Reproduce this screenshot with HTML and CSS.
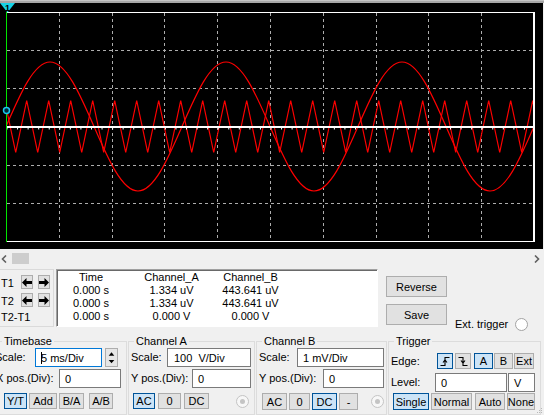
FILE: index.html
```html
<!DOCTYPE html>
<html>
<head>
<meta charset="utf-8">
<title>Oscilloscope</title>
<link rel="stylesheet" href="styles.css">
</head>
<body>
<div class="topbar"></div>
<div class="screen">
  <svg width="543" height="246" viewBox="0 3 543 246" xmlns="http://www.w3.org/2000/svg">
    <defs>
      <clipPath id="plot"><rect x="7" y="13" width="526" height="228"/></clipPath>
    </defs>
    <rect x="0" y="3" width="543" height="246" fill="#000"/>
    <g stroke="#adadad" stroke-width="1" stroke-dasharray="3 3" fill="none">
      <line x1="59.5" y1="13" x2="59.5" y2="241"/>
      <line x1="112.5" y1="13" x2="112.5" y2="241"/>
      <line x1="164.5" y1="13" x2="164.5" y2="241"/>
      <line x1="217.5" y1="13" x2="217.5" y2="241"/>
      <line x1="270.5" y1="13" x2="270.5" y2="241"/>
      <line x1="323.5" y1="13" x2="323.5" y2="241"/>
      <line x1="376.5" y1="13" x2="376.5" y2="241"/>
      <line x1="428.5" y1="13" x2="428.5" y2="241"/>
      <line x1="481.5" y1="13" x2="481.5" y2="241"/>
      <line x1="7" y1="50.5" x2="533" y2="50.5"/>
      <line x1="7" y1="88.5" x2="533" y2="88.5"/>
      <line x1="7" y1="165.5" x2="533" y2="165.5"/>
      <line x1="7" y1="203.5" x2="533" y2="203.5"/>
    </g>
    <g clip-path="url(#plot)" fill="none" stroke="#ff0000" stroke-width="1.2">
      <path d="M6,126.5 c14.35,-33.04 28.07,-64.5 44,-64.5 s29.65,31.46 44,64.5 s28.07,64.5 44,64.5 s29.65,-31.46 44,-64.5 s28.07,-64.5 44,-64.5 s29.65,31.46 44,64.5 s28.07,64.5 44,64.5 s29.65,-31.46 44,-64.5 s28.07,-64.5 44,-64.5 s29.65,31.46 44,64.5 s28.07,64.5 44,64.5 s29.65,-31.46 44,-64.5"/>
      <path d="M6,106.6 L15.7,152.5 l11,-52 l11,52 l11,-52 l11,52 l11,-52 l11,52 l11,-52 l11,52 l11,-52 l11,52 l11,-52 l11,52 l11,-52 l11,52 l11,-52 l11,52 l11,-52 l11,52 l11,-52 l11,52 l11,-52 l11,52 l11,-52 l11,52 l11,-52 l11,52 l11,-52 l11,52 l11,-52 l11,52 l11,-52 l11,52 l11,-52 l11,52 l11,-52 l11,52 l11,-52 l11,52 l11,-52 l11,52 l11,-52 l11,52 l11,-52 l11,52 l11,-52 l11,52 l11,-52 l1.3,6.1"/>
    </g>
    <line x1="7" y1="127" x2="533" y2="127" stroke="#fff" stroke-width="2"/>
    <line x1="6.5" y1="128.8" x2="533" y2="128.8" stroke="#fff" stroke-width="1.5" stroke-dasharray="1 9.56"/>
    <line x1="7" y1="12.5" x2="534" y2="12.5" stroke="#fff" stroke-width="1"/>
    <line x1="6" y1="241.5" x2="535" y2="241.5" stroke="#fff" stroke-width="1"/>
    <rect x="533" y="12" width="2" height="230" fill="#fff"/>
    <line x1="6.5" y1="12" x2="6.5" y2="242" stroke="#00e600" stroke-width="1"/>
    <circle cx="6.5" cy="110.5" r="3" fill="#002a3a" stroke="#19c8f0" stroke-width="1.5"/>
    <polygon points="0,3 15,3 7.5,12.5" fill="#14d2e6"/>
    <text x="7.5" y="10.5" font-family="Liberation Sans, Arial, sans-serif" font-size="9" font-weight="bold" text-anchor="middle" fill="#000">1</text>
  </svg>
</div>
<div class="hscroll">
  <svg class="chev chev-l" width="6" height="8" viewBox="0 0 6 8"><polyline points="5,0.5 1.5,4 5,7.5" fill="none" stroke="#606060" stroke-width="1.6"/></svg>
  <div class="thumb"></div>
  <svg class="chev chev-r" width="6" height="8" viewBox="0 0 6 8"><polyline points="1,0.5 4.5,4 1,7.5" fill="none" stroke="#606060" stroke-width="1.6"/></svg>
</div>
<div class="mid">
  <div class="cursors">
    <div class="crow">
      <span class="clabel">T1</span>
      <button class="arr"><svg width="10" height="9" viewBox="0 0 10 9"><polygon points="0,4.5 4.5,0 4.5,3 10,3 10,6 4.5,6 4.5,9" fill="#000"/></svg></button>
      <button class="arr arr2"><svg width="10" height="9" viewBox="0 0 10 9"><polygon points="10,4.5 5.5,0 5.5,3 0,3 0,6 5.5,6 5.5,9" fill="#000"/></svg></button>
    </div>
    <div class="crow crow2">
      <span class="clabel">T2</span>
      <button class="arr"><svg width="10" height="9" viewBox="0 0 10 9"><polygon points="0,4.5 4.5,0 4.5,3 10,3 10,6 4.5,6 4.5,9" fill="#000"/></svg></button>
      <button class="arr arr2"><svg width="10" height="9" viewBox="0 0 10 9"><polygon points="10,4.5 5.5,0 5.5,3 0,3 0,6 5.5,6 5.5,9" fill="#000"/></svg></button>
    </div>
    <div class="crow3">T2-T1</div>
  </div>
  <div class="readout">
    <span>Time</span><span>Channel_A</span><span>Channel_B</span>
    <span>0.000 s</span><span>1.334 uV</span><span>443.641 uV</span>
    <span>0.000 s</span><span>1.334 uV</span><span>443.641 uV</span>
    <span>0.000 s</span><span>0.000 V</span><span>0.000 V</span>
  </div>
  <div class="actions">
    <button class="btn big">Reverse</button>
    <button class="btn big">Save</button>
  </div>
  <div class="ext">
    <span class="ext-label">Ext. trigger</span>
    <span class="radio"></span>
  </div>
</div>
<div class="controls">
  <fieldset class="fs fs-time">
    <legend>Timebase</legend>
    <div class="row">
      <span class="lbl tb-l1">Scale:</span>
      <span class="field focus tb-f1"><span class="caret"></span>5 ms/Div</span>
      <span class="spin">
        <svg width="11" height="8" viewBox="0 0 11 8"><polygon points="2.5,6 8.5,6 5.5,2.5" fill="#000"/></svg>
        <svg width="11" height="8" viewBox="0 0 11 8"><polygon points="2.5,2 8.5,2 5.5,5.5" fill="#000"/></svg>
      </span>
    </div>
    <div class="row">
      <span class="lbl tb-l2">X pos.(Div):</span>
      <span class="field tb-f2">0</span>
    </div>
    <div class="brow tb-b">
      <button class="btn on w23">Y/T</button>
      <button class="btn w28 g2">Add</button>
      <button class="btn w25 g2">B/A</button>
      <button class="btn w24 g5">A/B</button>
    </div>
  </fieldset>
  <fieldset class="fs fs-a">
    <legend>Channel A</legend>
    <div class="row">
      <span class="lbl a-l1">Scale:</span>
      <span class="field a-f1 wide">100&nbsp; V/Div</span>
    </div>
    <div class="row">
      <span class="lbl a-l2">Y pos.(Div):</span>
      <span class="field a-f2">0</span>
    </div>
    <div class="brow a-b">
      <button class="btn on w22">AC</button>
      <button class="btn w23 g3">0</button>
      <button class="btn w25 g3">DC</button>
      <span class="radio dis a-r"></span>
    </div>
  </fieldset>
  <fieldset class="fs fs-b">
    <legend>Channel B</legend>
    <div class="row">
      <span class="lbl b-l1">Scale:</span>
      <span class="field b-f1 wide">1 mV/Div</span>
    </div>
    <div class="row">
      <span class="lbl b-l2">Y pos.(Div):</span>
      <span class="field b-f2">0</span>
    </div>
    <div class="brow b-b">
      <button class="btn w25">AC</button>
      <button class="btn w21 g2">0</button>
      <button class="btn on w25 g2">DC</button>
      <button class="btn w19 g2">-</button>
      <span class="radio dis b-r"></span>
    </div>
  </fieldset>
  <fieldset class="fs fs-trig">
    <legend>Trigger</legend>
    <div class="trow1">
      <span class="lbl t-l1">Edge:</span>
      <button class="btn on sq"><svg width="12" height="12" viewBox="0 0 12 12"><path d="M1.5,10.5 H6 V2.5 H10.5 M4,7.5 L6,5 L8,7.5" fill="none" stroke="#000" stroke-width="1.1"/></svg></button>
      <button class="btn sq g2"><svg width="12" height="12" viewBox="0 0 12 12"><path d="M1.5,2.5 H6 V10.5 H10.5 M4,5.5 L6,8 L8,5.5" fill="none" stroke="#000" stroke-width="1.1"/></svg></button>
      <button class="btn on w19 g3">A</button>
      <button class="btn w19 g1">B</button>
      <button class="btn w20 g1">Ext</button>
    </div>
    <div class="trow2">
      <span class="lbl t-l2">Level:</span>
      <span class="field t-f1 low">0</span>
      <span class="field t-f2 low">V</span>
    </div>
    <div class="brow t-b">
      <button class="btn on w36">Single</button>
      <button class="btn w41 g2">Normal</button>
      <button class="btn w30 g3">Auto</button>
      <button class="btn w28 g2">None</button>
    </div>
  </fieldset>
</div>
<svg class="grip" width="6" height="6" viewBox="0 0 6 6"><g fill="#b8b8b8"><rect x="4" y="0" width="1" height="1"/><rect x="2" y="2" width="1" height="1"/><rect x="4" y="2" width="1" height="1"/><rect x="0" y="4" width="1" height="1"/><rect x="2" y="4" width="1" height="1"/><rect x="4" y="4" width="1" height="1"/></g></svg>
</body>
</html>
```
FILE: styles.css
```css
* { box-sizing: border-box; }
html, body { margin: 0; padding: 0; }
body {
  position: relative;
  width: 544px;
  height: 415px;
  overflow: hidden;
  background: #f0f0f0;
  font-family: "Liberation Sans", Arial, sans-serif;
  font-size: 11px;
  color: #000;
}
.topbar { height: 3px; background: #a6a6a6; border-top: 1px solid #c4c4c4; }
.screen { height: 246px; width: 543px; background: #000; }
.screen svg { display: block; }

.hscroll { height: 16px; display: flex; align-items: flex-start; padding-top: 4px; }
.chev { display: block; margin-top: 2px; }
.chev-l { margin-left: 1px; }
.thumb { width: 17px; height: 11px; background: #cdcdcd; margin-left: 5px; }
.chev-r { margin-left: auto; margin-right: 4px; }

.mid { height: 70px; padding-top: 4px; display: flex; align-items: flex-start; }
.cursors {
  width: 55px; height: 58px; margin-left: -1px;
  border: 1px solid #dadada;
  padding-top: 5px;
}
.crow { display: flex; align-items: center; height: 14px; }
.crow2 { margin-top: 4px; }
.clabel { width: 21px; padding-left: 1px; padding-top: 3px; line-height: 13px; }
.arr {
  width: 12px; height: 14px; padding: 0; margin: 0;
  border: 1px solid #adadad; background: #e1e1e1;
  display: flex; align-items: center; justify-content: center;
}
.arr svg { display: block; }
.arr2 { margin-left: 5px; }
.crow3 { margin-top: 4px; line-height: 13px; padding-left: 1px; }

.readout {
  margin-left: 2px;
  width: 322px; height: 58px;
  background: #fff;
  border: 1px solid;
  border-color: #a0a0a0 #fff #fff #a0a0a0;
  box-shadow: inset 1px 1px 0 #696969;
  padding-top: 1px;
  display: grid;
  grid-template-columns: 68px 93px 65px;
  grid-auto-rows: 13px;
  line-height: 13px;
  text-align: center;
  white-space: nowrap;
}

.btn {
  font-family: inherit; font-size: 11px; color: #000;
  margin: 0; padding: 0;
  border: 1px solid #adadad; background: #e1e1e1;
  display: flex; align-items: center; justify-content: center;
  white-space: nowrap;
}
.btn.on { background: #cce4f7; border-color: #005499; }
.actions { margin-left: 8px; padding-top: 7px; display: flex; flex-direction: column; gap: 7px; }
.big { width: 61px; height: 21px; }
.ext { margin-left: 8px; margin-top: 49px; height: 13px; display: flex; align-items: center; }
.ext-label { width: 60px; line-height: 13px; }
.radio {
  width: 13px; height: 13px; border-radius: 50%;
  border: 1px solid #a3a3a3; background: #fff;
  display: block; position: relative;
}
.radio.dis { border-color: #c4c4c4; background: #f7f7f7; }
.radio.dis::after {
  content: ""; position: absolute; left: 3px; top: 3px;
  width: 5px; height: 5px; border-radius: 50%; background: #c4c4c4;
}

.controls { display: flex; gap: 1px; margin-left: -8px; height: 80px; }
.fs {
  margin: 0; min-width: 0; height: 80px;
  border: 1px solid #dcdcdc;
  padding: 0 0 0 1px;
}
.fs legend { padding: 0 2px; line-height: 13px; margin-left: 4px; }
.fs-time { width: 135px; }
.fs-time legend { margin-left: 8px; }
.fs-a { width: 127px; }
.fs-b { width: 131px; }
.fs-trig { width: 153px; }

.row { display: flex; align-items: center; height: 19px; }
.row + .row { margin-top: 2px; }
.lbl { white-space: nowrap; line-height: 13px; }
.field {
  height: 19px; background: #fff;
  border: 1px solid #7a7a7a;
  padding-left: 5px;
  display: flex; align-items: center;
  white-space: nowrap;
}
.field.focus { border-color: #0078d7; }
.field.low { align-items: flex-end; padding-bottom: 2px; }
.caret { display: inline-block; width: 0; height: 12px; border-left: 1px solid #000; margin-right: -1px; }
.spin {
  width: 13px; height: 19px; margin-left: 3px;
  border: 1px solid #adadad; background: #e6e6e6;
  display: flex; flex-direction: column; justify-content: space-between;
  padding: 1px 0;
}
.spin svg { display: block; margin: 0 auto; }

.brow { display: flex; align-items: center; height: 16px; margin-top: 5px; }
.brow .btn { height: 16px; }

.tb-l1 { width: 41px; padding-left: 1px; }
.tb-f1 { width: 67px; }
.tb-l2 { width: 65px; padding-left: 2px; }
.tb-f2 { width: 62px; }
.tb-b { margin-left: 10px; }

.a-l1 { width: 37px; padding-left: 1px; }
.a-f1 { width: 84px; padding-left: 6px; }
.a-l2 { width: 62px; padding-left: 1px; }
.a-f2 { width: 59px; }
.a-b { margin-left: 3px; }
.a-r { margin-left: 27px; }

.b-l1 { width: 39px; padding-left: 1px; }
.b-f1 { width: 87px; }
.b-l2 { width: 65px; padding-left: 1px; }
.b-f2 { width: 61px; }
.b-b { margin-left: 4px; height: 17px; }
.b-b .btn { height: 17px; }
.b-r { margin-left: 13px; }

.trow1 { display: flex; align-items: center; height: 16px; margin-top: 5px; }
.trow1 .btn { height: 16px; }
.t-l1 { width: 47px; padding-left: 1px; }
.sq { width: 16px; }
.trow2 { display: flex; align-items: center; height: 19px; margin-top: 4px; }
.t-l2 { width: 45px; padding-left: 1px; }
.t-f1 { width: 72px; }
.t-f2 { width: 27px; margin-left: 1px; }
.t-b { margin-top: 1px; margin-left: 3px; height: 17px; }
.t-b .btn { height: 17px; }

.w19 { width: 19px; } .w20 { width: 20px; } .w21 { width: 21px; } .w22 { width: 22px; }
.w23 { width: 23px; } .w24 { width: 24px; } .w25 { width: 25px; } .w28 { width: 28px; }
.w30 { width: 30px; } .w36 { width: 36px; } .w41 { width: 41px; }
.g1 { margin-left: 1px; } .g2 { margin-left: 2px; } .g3 { margin-left: 3px; } .g5 { margin-left: 5px; }

.grip { position: absolute; right: 1px; bottom: 1px; display: block; }
```
